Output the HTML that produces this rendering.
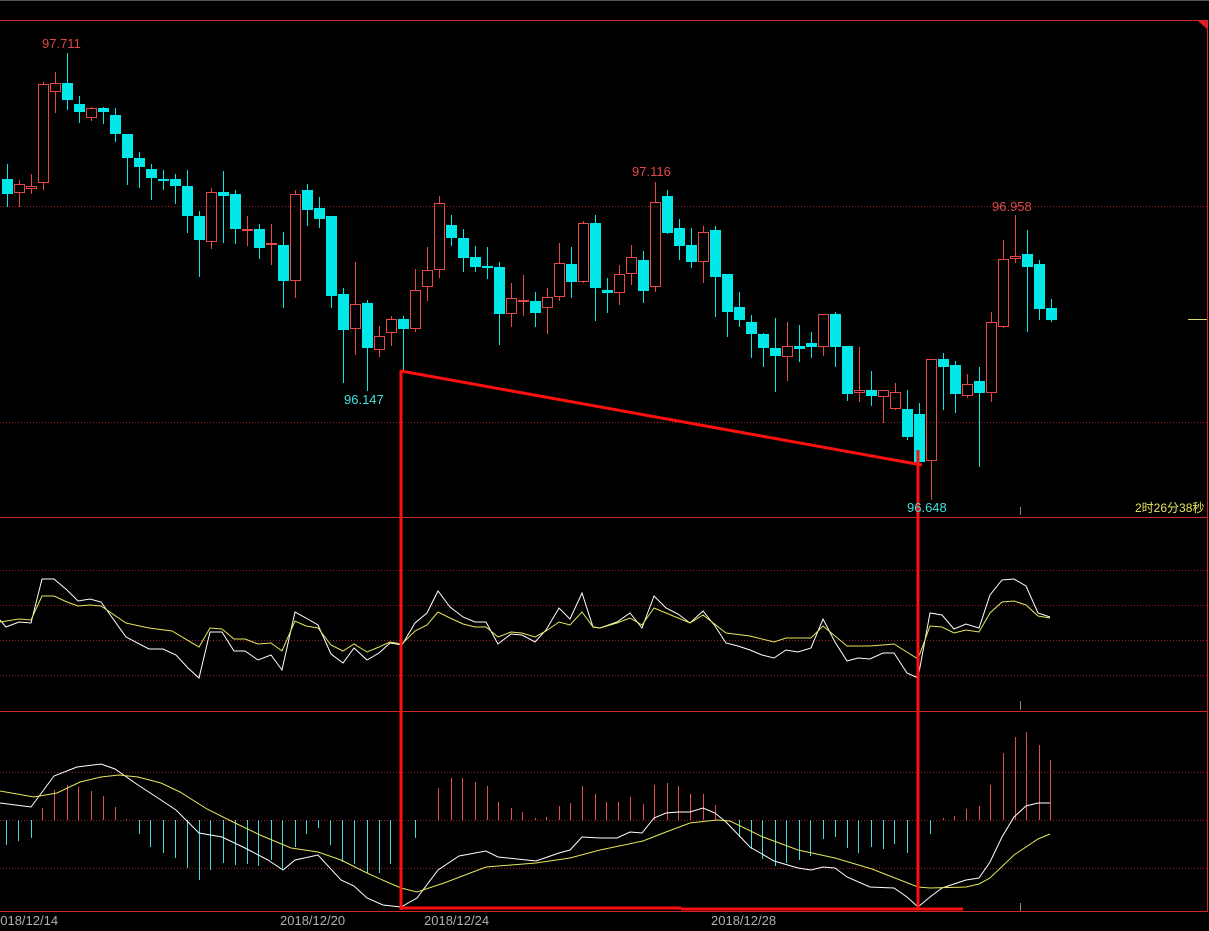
<!DOCTYPE html>
<html><head><meta charset="utf-8"><style>
html,body{margin:0;padding:0;background:#000;overflow:hidden}
svg{display:block}
text{font-family:"Liberation Sans","Noto Sans CJK SC",sans-serif;font-size:13px}
</style></head><body>
<svg id="s" width="1209" height="931" viewBox="0 0 1209 931" xmlns="http://www.w3.org/2000/svg">
<rect width="1209" height="931" fill="#000"/>
<line x1="0" y1="0.5" x2="1209" y2="0.5" stroke="#555"/>
<g stroke="#a32020" stroke-dasharray="1,2" stroke-width="1">
<line x1="0" y1="206.5" x2="1207" y2="206.5"/>
<line x1="0" y1="422.5" x2="1207" y2="422.5"/>
<line x1="0" y1="570.5" x2="1207" y2="570.5"/>
<line x1="0" y1="605.5" x2="1207" y2="605.5"/>
<line x1="0" y1="640.5" x2="1207" y2="640.5"/>
<line x1="0" y1="675.5" x2="1207" y2="675.5"/>
<line x1="0" y1="772.5" x2="1207" y2="772.5"/>
<line x1="0" y1="820.5" x2="1207" y2="820.5"/>
<line x1="0" y1="868.5" x2="1207" y2="868.5"/>
</g>
<g fill="#d02828">
<rect x="0" y="20" width="1208" height="1"/>
<rect x="0" y="517" width="1208" height="1"/>
<rect x="0" y="711" width="1208" height="1"/>
<rect x="0" y="911" width="1208" height="1"/>
<rect x="1207" y="20" width="1" height="892"/>
</g>
<polygon points="1198,21 1207,21 1207,29" fill="#e02020"/>
<line x1="1188" y1="319.5" x2="1207" y2="319.5" stroke="#d8d860"/>
<g stroke="#888" stroke-width="1">
<line x1="1020.5" y1="507" x2="1020.5" y2="515"/>
<line x1="1020.5" y1="701" x2="1020.5" y2="710"/>
<line x1="1020.5" y1="903" x2="1020.5" y2="911"/>
</g>
<g id="cd"></g>
<g id="hist"></g>
<polyline id="ow" fill="none" stroke="#ffffff" stroke-width="1"/>
<polyline id="oy" fill="none" stroke="#e6e65a" stroke-width="1"/>
<polyline id="mw" fill="none" stroke="#ffffff" stroke-width="1"/>
<polyline id="my" fill="none" stroke="#e6e65a" stroke-width="1"/>
<g stroke="#ff1010" stroke-width="3" fill="none">
<line x1="401" y1="371" x2="922" y2="465"/>
<line x1="401" y1="370" x2="401" y2="910"/>
<line x1="918" y1="450" x2="918" y2="910"/>
<line x1="401" y1="908" x2="681" y2="908"/>
<line x1="681" y1="909" x2="963" y2="909"/>
</g>
<g>
<text x="42" y="48" fill="#e04848">97.711</text>
<text x="344" y="404" fill="#40e0e0">96.147</text>
<text x="632" y="176" fill="#e04848">97.116</text>
<text x="992" y="211" fill="#e04848">96.958</text>
<text x="907" y="512" fill="#40e0e0">96.648</text>
<text x="1135" y="512" fill="#e6e65a" style="font-size:12px">2时26分38秒</text>
<text x="-7" y="925" fill="#b0b0b0">2018/12/14</text>
<text x="280" y="925" fill="#b0b0b0">2018/12/20</text>
<text x="424" y="925" fill="#b0b0b0">2018/12/24</text>
<text x="711" y="925" fill="#b0b0b0">2018/12/28</text>
</g>
</svg>
<script>
var NS="http://www.w3.org/2000/svg";
function el(p,t,a){var e=document.createElementNS(NS,t);for(var k in a)e.setAttribute(k,a[k]);p.appendChild(e);return e;}
var C=[
"c,179,194,164,207","r,184,193,180,207","r,186,189,174,194","r,84,183,82,190","r,83,92,72,113","c,83,100,53,110","c,104,112,96,123","r,108,118,107,121","c,108,112,107,124","c,115,134,108,142",
"c,134,158,134,185","c,158,167,152,188","c,169,178,164,200","c,179,181,170,190","c,179,186,174,204","c,186,216,170,233","c,216,240,211,277","r,192,242,188,249","c,192,196,171,243","c,194,229,190,244",
"r,229,231,216,246","c,229,248,224,259","r,243,245,224,265","c,245,281,232,308","r,194,281,190,298","c,190,210,184,226","c,208,219,197,228","c,216,296,216,308","c,294,330,288,383","r,304,329,262,355",
"c,303,348,300,391","r,336,350,326,357","r,319,333,316,346","c,319,329,316,370","r,290,329,269,332","r,270,287,247,301","r,203,270,196,278","c,225,238,215,246","c,238,258,229,272","c,257,267,246,272",
"c,266,268,247,279","c,267,314,262,345","r,298,314,283,327","r,300,302,275,316","c,301,313,292,327","r,297,308,288,334","r,263,297,243,301","c,264,282,247,298","r,223,282,221,283","c,223,288,215,321",
"c,290,293,278,313","r,274,293,265,305","r,257,274,245,285","c,260,291,251,303","r,202,287,182,292","c,196,233,190,234","c,228,246,219,260","c,245,262,228,268","r,232,262,226,283","c,230,277,226,317",
"c,274,312,274,337","c,307,320,292,327","c,322,334,315,358","c,334,348,333,367","c,348,356,318,392","r,346,357,322,381","c,346,349,325,362","c,343,347,332,358","r,314,347,314,356","c,314,347,312,367",
"c,346,394,346,401","r,390,393,347,402","c,390,396,371,406","r,390,397,390,423","r,392,409,383,410","c,409,437,390,440","c,414,462,403,462","r,359,461,359,500","c,359,367,353,410","c,365,394,361,413",
"r,384,396,374,398","c,381,393,367,467","r,322,393,312,402","r,259,327,240,328","r,256,259,215,263","c,254,267,230,332","c,264,309,260,320","c,308,320,299,322"];
var g=document.getElementById("cd");
C.forEach(function(s,k){var a=s.split(","),x=7+12*k,t=+a[1],b=+a[2],h=+a[3],l=+a[4];
 if(a[0]=="c"){el(g,"line",{x1:x+.5,y1:h,x2:x+.5,y2:l,stroke:"#00e8e8"});el(g,"rect",{x:x-5,y:t,width:11,height:Math.max(b-t,2),fill:"#00e8e8"});}
 else{var col="#e84848";el(g,"line",{x1:x+.5,y1:h,x2:x+.5,y2:t,stroke:col});el(g,"line",{x1:x+.5,y1:b,x2:x+.5,y2:l,stroke:col});el(g,"rect",{x:x-4.5,y:t+.5,width:10,height:Math.max(b-t-1,1),fill:"none",stroke:col});}
});
var H=[[6,845],[18,841],[31,838],[42,808],[54,790],[67,785],[78,787],[91,791],[103,796],[115,807],[126,819],[139,834],[150,847],[163,853],[175,858],[187,868],[199,880],[210,870],[223,863],[235,865],[247,864],[258,866],[271,860],[282,870],[295,847],[306,834],[318,828],[330,845],[342,862],[354,864],[367,873],[379,873],[390,864],[415,838],[438,788],[451,778],[462,778],[475,782],[487,786],[498,802],[511,808],[522,812],[535,818],[546,817],[559,806],[570,803],[582,786],[595,794],[606,802],[618,802],[630,797],[643,804],[654,785],[667,783],[678,786],[690,794],[703,794],[715,805],[739,837],[751,849],[762,859],[775,866],[786,863],[799,860],[810,856],[823,839],[835,837],[847,848],[858,853],[871,847],[883,849],[894,844],[907,853],[930,834],[943,818],[954,816],[966,809],[979,806],[990,785],[1003,753],[1015,737],[1026,732],[1039,745],[1050,760]];
var hg=document.getElementById("hist");
H.forEach(function(p){el(hg,"line",{x1:p[0]+.5,y1:820,x2:p[0]+.5,y2:p[1],stroke:p[1]<820?"#e05050":"#40d8e0"});});
function pl(id,a){document.getElementById(id).setAttribute("points",a.map(function(p){return p.join(",")}).join(" "));}
pl("ow",[[0,620],[6,627],[19,622],[31,623],[42,579],[54,579],[67,590],[78,601],[90,599],[101,602],[126,637],[149,649],[163,649],[176,655],[188,668],[199,678],[210,632],[222,632],[234,651],[245,651],[258,660],[271,655],[282,670],[295,612],[306,618],[318,625],[331,654],[343,663],[354,648],[367,660],[379,653],[390,643],[402,645],[415,623],[427,613],[438,591],[450,607],[463,617],[475,622],[486,622],[498,644],[511,634],[522,635],[535,642],[546,630],[559,608],[570,619],[582,593],[593,627],[600,628],[617,622],[630,613],[642,628],[654,596],[666,608],[678,614],[690,623],[703,611],[715,626],[726,643],[738,646],[750,650],[762,655],[774,658],[786,650],[798,652],[811,648],[823,619],[835,642],[847,661],[858,658],[870,659],[883,653],[894,653],[907,673],[918,678],[930,613],[942,615],[954,629],[966,624],[979,628],[990,595],[1002,580],[1014,579],[1026,586],[1038,613],[1050,617]]);
pl("oy",[[0,622],[19,619],[31,620],[42,596],[54,596],[67,602],[78,606],[90,605],[101,606],[126,623],[149,628],[172,631],[199,647],[210,628],[222,629],[234,639],[245,639],[258,644],[271,643],[282,651],[295,621],[306,626],[318,628],[331,645],[343,651],[354,644],[367,652],[379,647],[390,642],[402,644],[415,631],[427,625],[438,612],[450,618],[463,624],[475,627],[486,627],[498,637],[511,632],[522,633],[535,637],[546,631],[559,622],[570,625],[582,612],[593,627],[600,628],[617,623],[630,618],[642,625],[654,608],[666,613],[690,623],[703,615],[726,633],[750,636],[774,642],[786,638],[811,638],[823,626],[847,646],[870,646],[894,644],[918,659],[930,626],[942,627],[954,633],[966,630],[979,632],[990,613],[1002,602],[1014,601],[1026,605],[1038,616],[1050,618]]);
pl("mw",[[0,803],[31,807],[54,776],[77,767],[101,764],[115,769],[138,785],[161,800],[176,810],[199,833],[222,837],[245,848],[268,860],[283,870],[295,860],[318,855],[341,880],[354,886],[367,898],[383,905],[401,907],[417,898],[438,870],[459,856],[486,851],[498,857],[536,861],[559,853],[570,850],[582,837],[600,838],[617,838],[630,832],[642,833],[654,818],[666,813],[678,812],[690,812],[703,808],[715,813],[726,822],[750,847],[774,861],[798,868],[811,870],[823,867],[835,868],[847,877],[870,887],[894,888],[907,897],[918,907],[930,897],[942,888],[966,880],[979,878],[990,862],[1002,837],[1014,817],[1026,806],[1038,803],[1050,803]]);
pl("my",[[0,791],[34,797],[57,793],[80,782],[101,777],[119,775],[138,777],[161,783],[180,792],[207,809],[233,822],[260,835],[291,848],[318,852],[341,860],[367,873],[387,882],[401,888],[417,892],[444,883],[486,867],[536,863],[570,858],[600,850],[643,841],[666,832],[690,823],[717,820],[730,821],[763,837],[798,850],[835,858],[872,869],[918,887],[930,888],[966,887],[979,884],[990,878],[1014,855],[1038,839],[1050,834]]);
</script>
</body></html>
